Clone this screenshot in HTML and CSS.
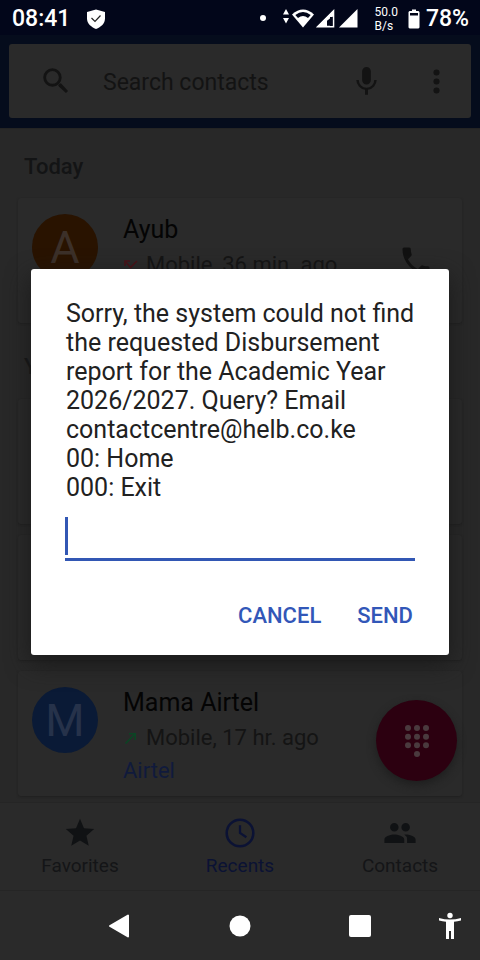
FILE: index.html
```
<!DOCTYPE html>
<html lang="en">
<head>
<meta charset="utf-8">
<meta name="viewport" content="width=device-width, initial-scale=1">
<title>Recents</title>
<link rel="stylesheet" href="styles.css">
</head>
<body>
<div class="phone">
  <header class="status">
    <span class="clock">08:41</span>
    <svg class="shield" width="20" height="20" viewBox="0 0 20 20"><path d="M10 .5 19 3v6.500c0 5-4 8.500-9 10.500-5-2-9-5.500-9-10.500V3z" fill="#fff"/><path d="m5.500 9 3.500 3.500 5.500-6" fill="none" stroke="#222" stroke-width="1.200"/></svg>
    <span class="spacer"></span>
    <svg class="signals" width="102" height="24" viewBox="0 0 102 24">
      <g fill="#fff">
        <circle cx="7" cy="11" r="3"/>
        <path d="m30 2 3 5.500h-6zM30 16.500l3-5.500h-6z"/>
        <path d="M36 7.500Q47-2.500 58 7.500L47 20.500z"/>
        <path d="M101.500 2v18.500h-18.500z"/>
      </g>
      <path d="M39.300 8Q47 2 54.700 8l-2.700 3q-5-4-10 0z" fill="#02061a"/>
      <path d="M77.500 4v15.700h-15.700z" fill="none" stroke="#fff" stroke-width="1.600"/>
      <path d="M78 3v7h-4v10H60.500z" fill="#fff"/>
      <path d="M76.500 9.500v9.300H71v-5z" fill="#02061a"/>
    </svg>
    <span class="speed">50.0<br>B/s</span>
    <svg class="battery" width="12" height="20" viewBox="0 0 12 20"><path d="M4 .500h4V2h2.500l1 1v15.500l-1 1h-9l-1-1V3l1-1H4z" fill="#fff"/><path d="M2 4h8v2.500H2z" fill="#02061a"/></svg>
    <span class="percent">78%</span>
  </header>

  <div class="appbar">
    <form class="search">
      <svg class="icon-search" width="34" height="34" viewBox="0 0 24 24"><circle cx="9.500" cy="9.500" r="5.500" fill="none" stroke="#131313" stroke-width="2"/><path fill="#131313" d="M13.500 15 15 13.500l.800.500 4.700 5-1.500 1.500-5-4.700z"/></svg>
      <input class="search-input" type="search" placeholder="Search contacts" aria-label="Search contacts">
      <button class="icon-btn" type="button" aria-label="Voice search"><svg width="35" height="35" viewBox="0 0 24 24"><path fill="#131313" d="M12 14a3 3 0 0 0 3-3V5a3 3 0 0 0-6 0v6a3 3 0 0 0 3 3zm5.300-3a5.300 5.300 0 0 1-10.600 0H5a7 7 0 0 0 6 6.720V21h2v-3.280A7 7 0 0 0 19 11z"/></svg></button>
      <button class="icon-btn" type="button" aria-label="More options"><svg width="35" height="35" viewBox="0 0 24 24"><g fill="#131313"><circle cx="12" cy="5.800" r="2.100"/><circle cx="12" cy="12" r="2.100"/><circle cx="12" cy="18.200" r="2.100"/></g></svg></button>
    </form>
  </div>

  <main class="calls">
    <h2 class="day day-first">Today</h2>
    <article class="card">
      <span class="avatar avatar-orange">A</span>
      <div class="info">
        <div class="name">Ayub</div>
        <div class="detail"><svg width="15" height="15" viewBox="0 0 15 15"><path d="M2 8V3h5M2.500 3.500l5 6L14 3" fill="none" stroke="#4a1218" stroke-width="1.600"/></svg>Mobile, 36 min. ago</div>
      </div>
      <button class="icon-btn call" type="button" aria-label="Call Ayub"><svg width="36" height="36" viewBox="0 0 24 24"><path fill="#111" d="M6.620 10.790a15.150 15.150 0 0 0 6.590 6.590l2.200-2.200a1 1 0 0 1 1.020-.24c1.120.37 2.330.57 3.570.57a1 1 0 0 1 1 1V20a1 1 0 0 1-1 1A17 17 0 0 1 3 4a1 1 0 0 1 1-1h3.500a1 1 0 0 1 1 1c0 1.250.2 2.450.57 3.570a1 1 0 0 1-.25 1.020z"/></svg></button>
    </article>
    <h2 class="day">Yesterday</h2>
    <article class="card"></article>
    <article class="card"></article>
    <article class="card">
      <span class="avatar avatar-blue">M</span>
      <div class="info">
        <div class="name">Mama Airtel</div>
        <div class="detail"><svg width="15" height="15" viewBox="0 0 15 15"><path d="M2.500 12.500 12 3M6 2.800h6.200V9" fill="none" stroke="#0b4524" stroke-width="1.600"/></svg>Mobile, 17 hr. ago</div>
        <div class="carrier">Airtel</div>
      </div>
    </article>
    <button class="fab" type="button" aria-label="Dial pad">
      <svg width="26" height="34" viewBox="0 0 26 34"><g fill="#4a3a3e"><circle cx="4" cy="4" r="3"/><circle cx="13" cy="4" r="3"/><circle cx="22" cy="4" r="3"/><circle cx="4" cy="12.700" r="3"/><circle cx="13" cy="12.700" r="3"/><circle cx="22" cy="12.700" r="3"/><circle cx="4" cy="21.300" r="3"/><circle cx="13" cy="21.300" r="3"/><circle cx="22" cy="21.300" r="3"/><circle cx="13" cy="30" r="3"/></g></svg>
    </button>
  </main>

  <nav class="tabs">
    <a class="tab" href="#favorites"><svg width="34" height="34" viewBox="0 0 24 24"><path fill="#101214" d="M12 17.270 18.180 21l-1.640-7.030L22 9.240l-7.190-.61L12 2 9.190 8.630 2 9.240l5.460 4.730L5.820 21z"/></svg>Favorites</a>
    <a class="tab tab-active" href="#recents"><svg width="34" height="34" viewBox="0 0 24 24"><circle cx="12" cy="12" r="9.400" fill="none" stroke="#0b1234" stroke-width="1.800"/><path d="M12 6.500V12l4.500 3" fill="none" stroke="#0b1234" stroke-width="1.600"/></svg>Recents</a>
    <a class="tab" href="#contacts"><svg width="34" height="34" viewBox="0 0 24 24"><path fill="#101214" d="M16 11a3 3 0 1 0 0-6 3 3 0 0 0 0 6zm-8 0a3 3 0 1 0 0-6 3 3 0 0 0 0 6zm0 2c-2.330 0-7 1.170-7 3.500V19h14v-2.500C15 14.170 10.330 13 8 13zm8 0c-.29 0-.62.020-.97.050A4.220 4.220 0 0 1 17 16.500V19h6v-2.500c0-2.330-4.670-3.500-7-3.500z"/></svg>Contacts</a>
  </nav>

  <footer class="sysnav">
    <span></span>
    <button class="icon-btn" type="button" aria-label="Back"><svg width="26" height="26" viewBox="0 0 26 26"><path d="M3 13 21 2.500v21z" fill="#fff" stroke="#fff" stroke-width="2" stroke-linejoin="round"/></svg></button>
    <button class="icon-btn" type="button" aria-label="Home"><svg width="26" height="26" viewBox="0 0 26 26"><circle cx="13" cy="13" r="10.500" fill="#fff"/></svg></button>
    <button class="icon-btn" type="button" aria-label="Overview"><svg width="26" height="26" viewBox="0 0 26 26"><rect x="2" y="2" width="22" height="22" rx="2" fill="#fff"/></svg></button>
    <button class="icon-btn access" type="button" aria-label="Accessibility"><svg width="24" height="28" viewBox="0 0 24 28"><g fill="#fff"><circle cx="12" cy="3.500" r="2.700"/><path d="M1 6q11 3 22 0v2.600q-3.500.9-7 1.200V27h-3v-8h-2v8H8V9.800q-3.500-.3-7-1.200z"/></g></svg></button>
  </footer>

  <div class="overlay">
    <form class="dialog" role="dialog" aria-labelledby="message">
      <label class="message" id="message" for="reply">Sorry, the system could not find the requested Disbursement report for the Academic Year 2026/2027. Query? Email contactcentre@helb.co.ke<br>00: Home<br>000: Exit</label>
      <div class="field"><input class="reply" id="reply" type="text" autocomplete="off"><span class="caret"></span></div>
      <div class="actions">
        <button class="action" type="button">CANCEL</button>
        <button class="action" type="button">SEND</button>
      </div>
    </form>
  </div>
</div>
</body>
</html>
```
FILE: styles.css
```
* { box-sizing: border-box; }

body {
  margin: 0;
  background: #282828;
  font-family: Roboto, "Liberation Sans", sans-serif;
}

button { border: 0; background: none; padding: 0; font: inherit; }
svg { display: block; flex: none; }

.phone {
  position: relative;
  display: flex;
  flex-direction: column;
  min-height: 100vh;
}

.status {
  display: flex;
  align-items: center;
  height: 35px;
  padding: 2px 11px 0 12px;
  background: #02061a;
  color: #fff;
  font-size: 23px;
  font-weight: 500;
}
.shield { margin-left: 16px; }
.spacer { flex: 1; }
.speed {
  margin-left: 17px;
  font-size: 12px;
  font-weight: 400;
  line-height: 14px;
}
.battery { margin: 0 6px 0 10px; }

.appbar {
  padding: 9px 9px 10px;
  background: #050c1c;
}
.search {
  display: flex;
  align-items: center;
  height: 74px;
  padding: 0 17px 0 30px;
  border-radius: 3px;
  background: #2a2a2a;
}
.search-input {
  flex: 1;
  min-width: 0;
  margin-left: 30px;
  padding: 2px 0 0;
  border: 0;
  outline: 0;
  background: none;
  color: #131313;
  font: 23px Roboto, sans-serif;
}
.search-input::placeholder { color: #131313; opacity: 1; }
.icon-btn { display: flex; justify-content: center; }
.search .icon-btn + .icon-btn { margin-left: 35px; }

.calls {
  position: relative;
  flex: 1;
  padding: 0 18px 6px;
  border-top: 1px solid #242424;
}
.day {
  height: 76px;
  margin: 0;
  padding: 0 6px;
  color: #131415;
  font-size: 22px;
  font-weight: 500;
  line-height: 88px;
}
.day-first { height: 69px; line-height: 76px; }
.card {
  display: flex;
  height: 125px;
  padding: 16px 14px;
  border-radius: 3px;
  background: #2a2a2a;
  box-shadow: 0 1px 2px #202020;
}
.card + .card { margin-top: 11px; }
.avatar {
  flex: none;
  width: 66px;
  height: 66px;
  border-radius: 50%;
  color: #3c3029;
  font-size: 45px;
  line-height: 68px;
  text-align: center;
}
.avatar-orange { background: #291300; }
.avatar-blue { background: #0a1a36; color: #26324a; }
.info { flex: 1; margin-left: 25px; }
.name { color: #040404; font-size: 25px; line-height: 32px; }
.detail {
  display: flex;
  align-items: center;
  gap: 8px;
  color: #141414;
  font-size: 22px;
  line-height: 38px;
}
.carrier { color: #101a3c; font-size: 22px; line-height: 27px; }
.call { align-self: center; margin-right: 14px; }
.fab {
  position: absolute;
  right: 23px;
  bottom: 21px;
  display: grid;
  place-items: center;
  width: 81px;
  height: 81px;
  border-radius: 50%;
  background: #2c0010;
  box-shadow: 0 4px 8px #1e1e1e;
}

.tabs {
  display: flex;
  height: 88px;
  border-top: 1px solid #252525;
  background: #2a2a2a;
}
.tab {
  flex: 1;
  display: flex;
  flex-direction: column;
  align-items: center;
  padding-top: 13px;
  color: #141517;
  font-size: 19px;
  line-height: 31px;
  text-decoration: none;
}
.tab-active { color: #0b1234; }

.sysnav {
  position: relative;
  display: grid;
  grid-template-columns: 1fr 2fr 2fr 2fr 1fr;
  align-items: center;
  height: 70px;
  border-top: 1px solid #252525;
  background: #2a2a2a;
}

.overlay {
  position: absolute;
  inset: 35px 0 71px;
  display: flex;
  align-items: center;
  justify-content: center;
  padding: 0 31px;
}
.dialog {
  width: 100%;
  max-width: 560px;
  padding: 30px 34px 18px;
  border-radius: 3px;
  background: #fff;
  box-shadow: 0 8px 24px #1a1a1a;
}
.message {
  display: block;
  color: #212121;
  font-size: 25px;
  line-height: 29px;
  margin-left: 1px;
}
.field { position: relative; }
.reply {
  display: block;
  width: 100%;
  height: 59px;
  padding: 0;
  border: 0;
  border-bottom: 3px solid #3257b4;
  outline: 0;
  background: none;
  color: #212121;
  font: 25px Roboto, sans-serif;
}
.caret {
  position: absolute;
  left: 0;
  bottom: 6px;
  width: 3px;
  height: 38px;
  background: #3257b4;
}
.actions {
  display: flex;
  justify-content: flex-end;
  gap: 36px;
  padding: 33px 2px 0;
}
.action {
  color: #3257b8;
  font-size: 22px;
  font-weight: 500;
  line-height: 43px;
}
```
